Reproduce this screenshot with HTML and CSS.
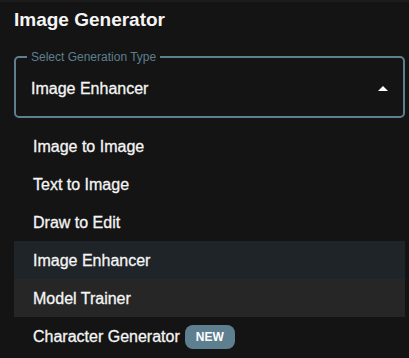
FILE: index.html
```html
<!DOCTYPE html>
<html lang="en">
<head>
  <meta charset="UTF-8" />
  <meta name="viewport" content="width=device-width, initial-scale=1.0"/>
  <title>Image Generator</title>
  <link rel="stylesheet" href="styles.css">
</head>
<body>
  <div class="panel">
    <h1>Image Generator</h1>

    <fieldset class="select-box">
      <legend>Select Generation Type</legend>
      <div class="select-value">
        <span>Image Enhancer</span>
        <span class="arrow"></span>
      </div>
    </fieldset>

    <ul class="options">
      <li>Image to Image</li>
      <li>Text to Image</li>
      <li>Draw to Edit</li>
      <li class="selected">Image Enhancer</li>
      <li class="hover">Model Trainer</li>
      <li>Character Generator <span class="badge">NEW</span></li>
    </ul>
  </div>
</body>
</html>
```

FILE: styles.css
```css
:root {
  --bg-color: #141414;
  --text-color: #f5f5f5;
  --accent: #5e7f8f;
  --selected-bg: #1f2428;
  --hover-bg: #262626;
}

body {
  margin: 0;
  font-family: 'Liberation Sans', Arial, sans-serif;
  background-color: var(--bg-color);
  color: var(--text-color);
  border-top: 2px solid #1c1c1c;
}

.panel {
  width: 391px;
  padding: 0 0 0 14px;
}

h1 {
  margin: 0;
  padding-top: 7px;
  font-size: 19px;
  font-weight: 700;
  line-height: 22px;
}

.select-box {
  margin: 20px 0 0;
  padding: 0 14px 0 15px;
  height: 67px;
  box-sizing: border-box;
  border: 2px solid var(--accent);
  border-radius: 5px;
}

.select-box legend {
  margin-left: -4px;
  padding: 0 4px;
  font-size: 12px;
  line-height: 12px;
  color: var(--accent);
}

.select-value {
  display: flex;
  justify-content: space-between;
  align-items: center;
  height: 57px;
  margin-top: -3px;
  font-size: 16px;
  -webkit-text-stroke: 0.3px currentColor;
}

.arrow {
  width: 0;
  height: 0;
  margin-right: 1px;
  border-left: 5px solid transparent;
  border-right: 5px solid transparent;
  border-bottom: 5px solid #ffffff;
}

.options {
  list-style: none;
  margin: 9px 0 0;
  padding: 0;
}

.options li {
  display: flex;
  align-items: center;
  gap: 5px;
  height: 38px;
  box-sizing: border-box;
  padding: 2px 0 0 19px;
  font-size: 16px;
  -webkit-text-stroke: 0.3px currentColor;
}

.options li.selected {
  background-color: var(--selected-bg);
}

.options li.hover {
  background-color: var(--hover-bg);
}

.badge {
  background-color: var(--accent);
  color: #ffffff;
  font-size: 12px;
  font-weight: 700;
  -webkit-text-stroke: 0;
  padding: 0 11px;
  height: 24px;
  line-height: 24px;
  border-radius: 8px;
}
```
